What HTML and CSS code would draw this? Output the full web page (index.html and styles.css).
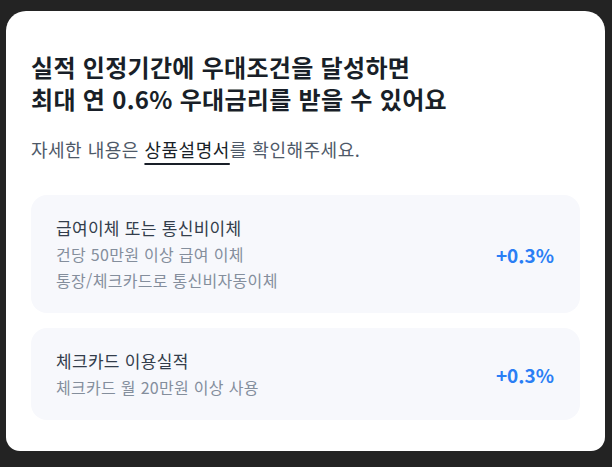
FILE: index.html
```html
<!DOCTYPE html>
<html lang="ko">
<head>
  <meta charset="UTF-8" />
  <title>우대금리 안내</title>
  <link rel="stylesheet" href="styles.css">
</head>
<body>
  <div class="sheet">
    <h1 class="title">실적 인정기간에 우대조건을 달성하면<br>최대 연 0.6% 우대금리를 받을 수 있어요</h1>
    <p class="desc">자세한 내용은 <a class="doc-link" href="#">상품설명서</a>를 확인해주세요.</p>

    <div class="conditions">
      <div class="cond">
        <div class="cond-text">
          <div class="cond-name">급여이체 또는 통신비이체</div>
          <div class="cond-sub">건당 50만원 이상 급여 이체</div>
          <div class="cond-sub">통장/체크카드로 통신비자동이체</div>
        </div>
        <div class="cond-rate">+0.3%</div>
      </div>
      <div class="cond">
        <div class="cond-text">
          <div class="cond-name">체크카드 이용실적</div>
          <div class="cond-sub">체크카드 월 20만원 이상 사용</div>
        </div>
        <div class="cond-rate">+0.3%</div>
      </div>
    </div>
  </div>
</body>
</html>
```

FILE: styles.css
```css
body { margin: 0; padding: 11px 7px 0 6px; background: #232323; font-family: "Noto Sans CJK KR", "Noto Sans", sans-serif; }
.sheet { background: #fff; border-radius: 20px 20px 14px 14px; padding: 40px 25px 31px; height: 440px; box-sizing: border-box; }
.title { margin: 0; font-size: 24px; line-height: 32px; font-weight: 700; color: #191f28; letter-spacing: 0.3px; }
.desc { margin: 21px 0 0; font-size: 18px; line-height: 26px; color: #4e5968; letter-spacing: 0.5px; }
.doc-link { color: #191f28; text-decoration: underline; text-decoration-thickness: 2px; text-underline-offset: 6px; }
.conditions { margin-top: 33px; display: flex; flex-direction: column; gap: 15px; }
.cond { display: flex; align-items: center; justify-content: space-between; background: #f7f8fc; border-radius: 16px; padding: 20px 26px 20px 25px; }
.cond-name { font-size: 17px; line-height: 26px; color: #333d4b; letter-spacing: 0.3px; }
.cond-sub { font-size: 16px; line-height: 26px; color: #848e9c; letter-spacing: 0.3px; }
.cond-rate { font-size: 19px; font-weight: 700; color: #2a7ef5; }
```
